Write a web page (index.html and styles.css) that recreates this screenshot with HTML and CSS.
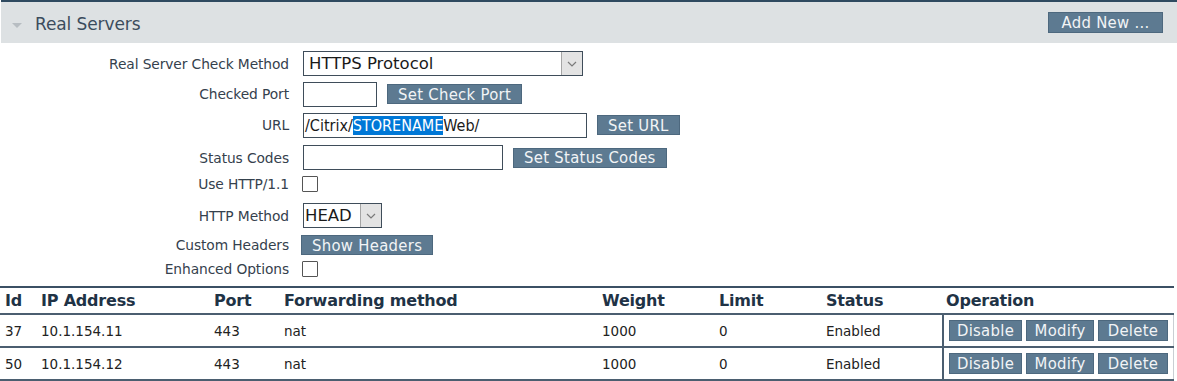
FILE: index.html
```html
<!DOCTYPE html>
<html>
<head>
<meta charset="utf-8">
<link rel="stylesheet" href="styles.css">
</head>
<body>
<div class="panel">
  <div class="panel-head">
    <span class="caret"></span>
    <span class="title">Real Servers</span>
    <span class="btn btn-add">Add New ...</span>
  </div>
  <div class="form">
    <div class="row r1">
      <label class="lbl">Real Server Check Method</label>
      <div class="ctl">
        <div class="select sel-wide"><span class="sel-text">HTTPS Protocol</span><span class="sel-arrow"><svg width="10" height="6" viewBox="0 0 10 6"><path d="M1 1 L5 5 L9 1" fill="none" stroke="#7a7a7a" stroke-width="1.2"/></svg></span></div>
      </div>
    </div>
    <div class="row r2">
      <label class="lbl">Checked Port</label>
      <div class="ctl">
        <div class="input in-port"></div>
        <span class="btn">Set Check Port</span>
      </div>
    </div>
    <div class="row r3">
      <label class="lbl">URL</label>
      <div class="ctl">
        <div class="input in-url">/Citrix/<span class="hl">STORENAME</span>Web/</div>
        <span class="btn">Set URL</span>
      </div>
    </div>
    <div class="row r4">
      <label class="lbl">Status Codes</label>
      <div class="ctl">
        <div class="input in-status"></div>
        <span class="btn">Set Status Codes</span>
      </div>
    </div>
    <div class="row r5">
      <label class="lbl">Use HTTP/1.1</label>
      <div class="ctl"><span class="check"></span></div>
    </div>
    <div class="row r6">
      <label class="lbl">HTTP Method</label>
      <div class="ctl">
        <div class="select sel-small"><span class="sel-text">HEAD</span><span class="sel-arrow"><svg width="10" height="6" viewBox="0 0 10 6"><path d="M1 1 L5 5 L9 1" fill="none" stroke="#7a7a7a" stroke-width="1.2"/></svg></span></div>
      </div>
    </div>
    <div class="row r7">
      <label class="lbl">Custom Headers</label>
      <div class="ctl"><span class="btn btn-show">Show Headers</span></div>
    </div>
    <div class="row r8">
      <label class="lbl">Enhanced Options</label>
      <div class="ctl"><span class="check"></span></div>
    </div>
  </div>
  <table class="grid">
    <thead>
      <tr>
        <th class="c-id">Id</th>
        <th class="c-ip">IP Address</th>
        <th class="c-port">Port</th>
        <th class="c-fwd">Forwarding method</th>
        <th class="c-w">Weight</th>
        <th class="c-lim">Limit</th>
        <th class="c-st">Status</th>
        <th class="c-op">Operation</th>
      </tr>
    </thead>
    <tbody>
      <tr>
        <td>37</td><td>10.1.154.11</td><td>443</td><td>nat</td><td>1000</td><td>0</td><td>Enabled</td>
        <td class="ops"><span class="btn b-dis">Disable</span><span class="btn b-mod">Modify</span><span class="btn b-del">Delete</span></td>
      </tr>
      <tr>
        <td>50</td><td>10.1.154.12</td><td>443</td><td>nat</td><td>1000</td><td>0</td><td>Enabled</td>
        <td class="ops"><span class="btn b-dis">Disable</span><span class="btn b-mod">Modify</span><span class="btn b-del">Delete</span></td>
      </tr>
    </tbody>
  </table>
</div>
</body>
</html>
```

FILE: styles.css
```css
html, body {
  margin: 0;
  padding: 0;
  background: #ffffff;
}
body {
  font-family: "DejaVu Sans", Verdana, sans-serif;
  color: #2e3c4a;
}
.panel {
  width: 1177px;
}
.panel-head {
  margin-left: 1px;
  border-top: 2px solid #2f4a60;
  background: #dde1e3;
  display: flex;
  align-items: center;
  padding: 3px 14px 0 11px;
  box-sizing: border-box;
  height: 43px;
}
.caret {
  width: 0;
  height: 0;
  border-left: 5px solid transparent;
  border-right: 5px solid transparent;
  border-top: 5px solid #b7bdc2;
  margin-right: 13px;
  margin-top: 2px;
}
.title {
  font-size: 17px;
  color: #3b4c5d;
  flex: 1;
  letter-spacing: -0.1px;
}
.btn {
  display: inline-flex;
  align-items: center;
  justify-content: center;
  background: #5d7a91;
  border: 1px solid #4d687e;
  color: #f2f4f6;
  font-family: "DejaVu Sans Condensed", "DejaVu Sans", sans-serif;
  font-size: 16.5px;
  letter-spacing: 0.3px;
  height: 18px;
  box-sizing: content-box;
  padding: 0 10px;
  white-space: nowrap;
}
.btn-add {
  padding: 0;
  width: 113px;
  height: 19px;
  margin-top: -3px;
}
.form {
  padding-top: 5px;
}
.row {
  display: flex;
  align-items: center;
}
.r1 { height: 31px; }
.r2 { height: 30px; }
.r3 { height: 32px; }
.r4 { height: 33px; }
.r5 { height: 20px; }
.r6 { height: 43px; }
.r7 { height: 16px; }
.r8 { height: 32px; }
.lbl {
  width: 289px;
  text-align: right;
  font-size: 13.8px;
  color: #35414d;
  letter-spacing: -0.1px;
}
.ctl {
  margin-left: 13px;
  display: flex;
  align-items: center;
  gap: 10px;
}
.select {
  display: flex;
  height: 23px;
  border: 1px solid #3f4d5a;
  background: #fff;
  margin-left: 1px;
}
.sel-text {
  flex: 1;
  font-family: "DejaVu Sans", sans-serif;
  font-size: 16.5px;
  color: #1a1a1a;
  padding-left: 5px;
  line-height: 23px;
  white-space: nowrap;
}
.sel-arrow {
  width: 20px;
  background: #e3e3e3;
  border-left: 1px solid #a5a5a5;
  display: flex;
  align-items: center;
  justify-content: center;
}
.sel-wide { width: 278px; }
.sel-small { width: 77px; }
.sel-small .sel-text { padding-left: 1px; }
.input {
  height: 23px;
  border: 1px solid #3f4d5a;
  background: #fff;
  box-sizing: content-box;
  margin-left: 1px;
  font-family: "DejaVu Sans Condensed", "DejaVu Sans", sans-serif;
  font-size: 16px;
  line-height: 23px;
  color: #1a1a1a;
  padding-left: 1px;
}
.in-port { width: 71px; }
.in-url { width: 281px; }
.in-status { width: 197px; }
.hl {
  background: #0078d7;
  color: #ffffff;
}
.check {
  display: inline-block;
  width: 14px;
  height: 14px;
  border: 1px solid #555;
  background: #fff;
  border-radius: 1px;
}
.btn-show {
  padding: 0 10px;
  margin-left: -1px;
}
.grid {
  width: 1174px;
  border-collapse: collapse;
  margin-top: 1px;
  border-top: 2px solid #3b5064;
}
.grid th {
  font-weight: bold;
  font-size: 16px;
  color: #1f3346;
  text-align: left;
  height: 25px;
  padding: 0;
  border-bottom: 2px solid #4b5e70;
  letter-spacing: -0.2px;
}
.grid td {
  font-size: 13.5px;
  color: #222;
  height: 31px;
  padding: 0;
  border-bottom: 2px solid #4b5e70;
}
.grid th:first-child, .grid td:first-child { padding-left: 5px; }
.c-id { width: 36px; }
.c-ip { width: 173px; }
.c-port { width: 70px; }
.c-fwd { width: 318px; }
.c-w { width: 117px; }
.c-lim { width: 107px; }
.c-st { width: 117px; }
.grid th.c-op { padding-left: 3px; }
.grid td.ops {
  border-left: 2px solid #4b5e70;
  border-right: 1px solid #c9ced3;
  padding-left: 5px;
  white-space: nowrap;
}
.ops .btn {
  padding: 0;
  height: 19px;
  font-size: 16.5px;
  margin-right: 4px;
}
.b-dis { width: 71px; }
.b-mod { width: 66px; margin-right: 5px; }
.b-del { width: 68px; margin-right: 0; }
```
